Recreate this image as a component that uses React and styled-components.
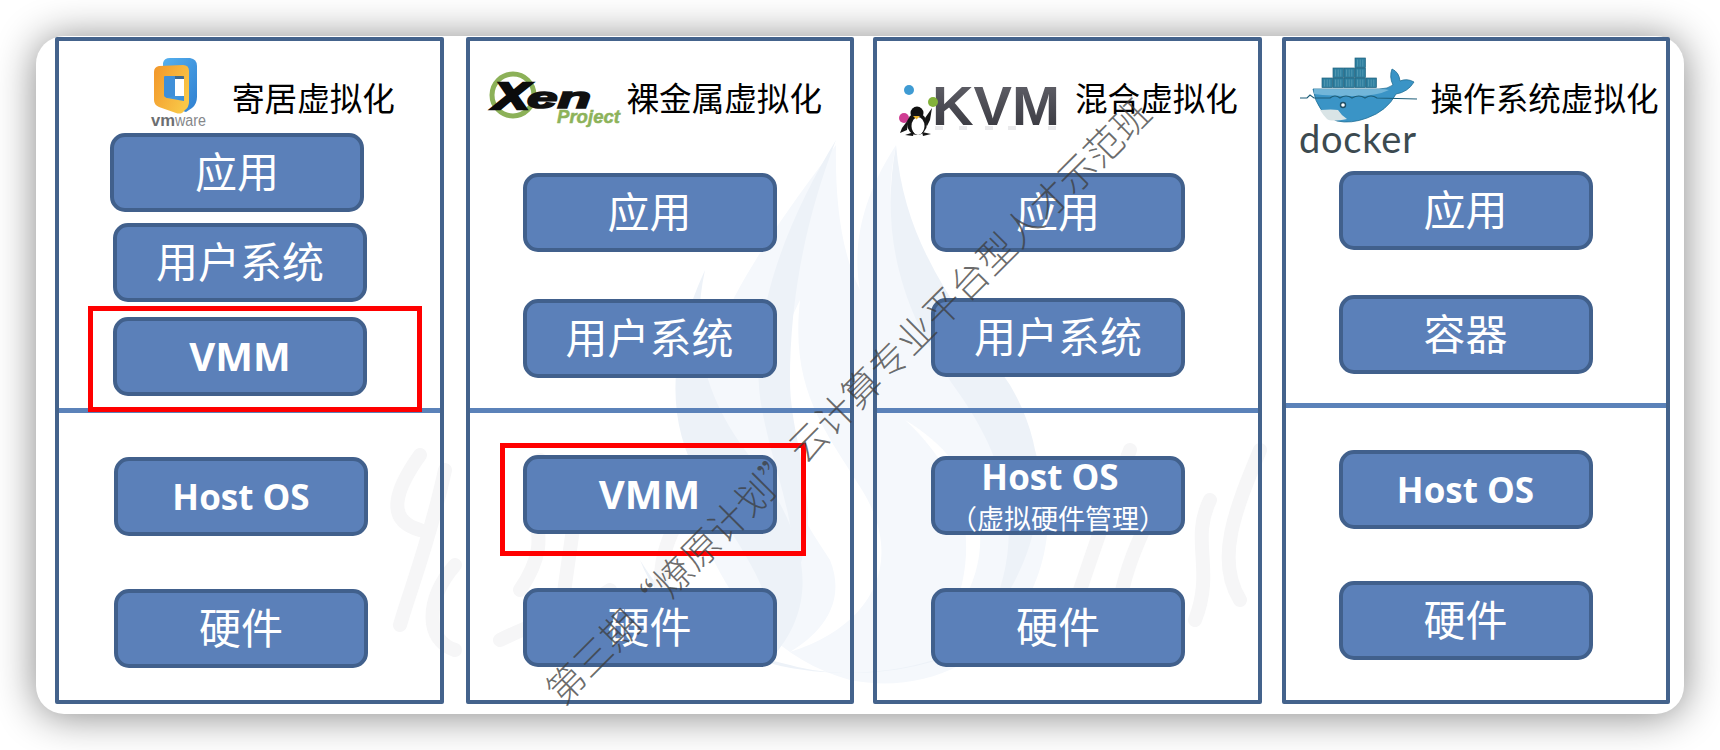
import React from 'react'
import styled, { createGlobalStyle } from 'styled-components'

const GlobalStyle = createGlobalStyle`
    html, body {
        margin: 0;
        padding: 0;
        background: #fff;
        overflow: hidden;
    }
`

function VmwareLogo() {
    return (
        <LogoSvg $left={89} $top={14} width="64" height="76" viewBox="0 0 64 76">
            <defs>
                <linearGradient id="vmBlue" x1="0" y1="0" x2="1" y2="1">
                    <stop offset="0" stopColor="#55b0ee" />
                    <stop offset="1" stopColor="#2f7fd0" />
                </linearGradient>
                <linearGradient id="vmOrange" x1="0" y1="0" x2="1" y2="0.6">
                    <stop offset="0" stopColor="#f2962a" />
                    <stop offset="1" stopColor="#f9c747" />
                </linearGradient>
            </defs>
            <path d="M15 8 Q16 3 22 3 L42 3 Q49 4 49 11 L49 42 Q49 49 44 53 L38 57 L15 50 Z" fill="url(#vmBlue)" />
            <path fillRule="evenodd" d="M6 17 Q6 12 11 11 L35 10 Q41 10 41 16 L41 47 Q41 52 37 55 L34 58 Q31 59 28 58 L11 52 Q6 50 6 45 Z M16 22 L16 40 Q16 42 19 43 L36 46 L36 24 Q36 21 33 21 L18 21 Q16 21 16 22 Z" fill="url(#vmOrange)" />
            <path d="M16 22 Q16 21 18 21 L27 21 L27 41 L19 43 Q16 42 16 40 Z" fill="#3f8fd8" />
            <rect x="27" y="24" width="9" height="17" fill="#fff" />
            <rect x="27" y="21" width="9" height="3" fill="#39556f" opacity="0.7" />
            <text x="3" y="71" fontFamily="'Liberation Sans', sans-serif" fontSize="16" fill="#6c6e71" fontWeight="700" textLength="24" lengthAdjust="spacingAndGlyphs">vm</text>
            <text x="27" y="71" fontFamily="'Liberation Sans', sans-serif" fontSize="16" fill="#85878a" textLength="31" lengthAdjust="spacingAndGlyphs">ware</text>
        </LogoSvg>
    )
}

function XenLogo() {
    return (
        <LogoSvg $left={11} $top={24} width="150" height="70" viewBox="0 0 150 70">
            <circle cx="32" cy="30" r="21" fill="none" stroke="#8cb158" strokeWidth="5" />
            <text x="13" y="44" fontFamily="'Liberation Sans', sans-serif" fontSize="37" fontWeight="700" fontStyle="italic" fill="#0b0b0b" stroke="#0b0b0b" strokeWidth="2.6" textLength="35" lengthAdjust="spacingAndGlyphs">X</text>
            <text x="46" y="43" fontFamily="'Liberation Sans', sans-serif" fontSize="29" fontWeight="700" fontStyle="italic" fill="#111" stroke="#111" strokeWidth="1.6" textLength="64" lengthAdjust="spacingAndGlyphs">en</text>
            <text x="76" y="58" fontFamily="'Liberation Sans', sans-serif" fontSize="19" fontWeight="700" fontStyle="italic" fill="#8db35a" stroke="#8db35a" strokeWidth="0.5" textLength="63" lengthAdjust="spacingAndGlyphs">Project</text>
        </LogoSvg>
    )
}

function KvmLogo() {
    return (
        <LogoSvg $left={18} $top={29} width="170" height="70" viewBox="0 0 170 70">
            <defs>
                <linearGradient id="kvmFace" x1="0" y1="0" x2="0" y2="1">
                    <stop offset="0" stopColor="#66666e" />
                    <stop offset="0.55" stopColor="#4a4a52" />
                    <stop offset="1" stopColor="#35353b" />
                </linearGradient>
            </defs>
            <text x="37" y="55" fontFamily="'Liberation Sans', sans-serif" fontSize="56" fontWeight="700" fill="url(#kvmFace)" textLength="128" lengthAdjust="spacingAndGlyphs">KVM</text>
            <g fill="#a5a5aa" opacity="0.22">
                <rect x="40" y="56" width="8" height="4" />
                <rect x="64" y="56" width="8" height="4" />
                <rect x="90" y="56" width="8" height="4" />
                <rect x="113" y="56" width="8" height="4" />
                <rect x="153" y="56" width="8" height="4" />
            </g>
            <circle cx="14" cy="20" r="5" fill="#3f9bd3" />
            <circle cx="38" cy="32" r="5" fill="#83b23a" />
            <circle cx="9" cy="48" r="5" fill="#cf3d93" />
            <path d="M30 48 L37 38 L35 50 L32 56 Z M13 50 L7 58 L5 63 L12 60 Z" fill="#141414" />
            <circle cx="22" cy="43" r="6.5" fill="#101010" />
            <ellipse cx="22" cy="54" rx="10" ry="11" fill="#141414" />
            <ellipse cx="23" cy="56" rx="6.5" ry="9" fill="#fff" />
            <path d="M18 46 L25 46 L21.5 49.5 Z" fill="#e9b32c" />
            <path d="M10 65 L19 62 L18 66 Z M27 62 L36 64 L28 66 Z" fill="#141414" />
        </LogoSvg>
    )
}

function DockerLogo() {
    const boxes = []
    const rows = [[27, 28, 5], [38, 18, 3], [60, 8, 1]]
    rows.forEach(([x, y, n]) => {
        for (let i = 0; i < n; i++) boxes.push([x + i * 11, y])
    })
    return (
        <LogoSvg $left={9} $top={9} width="130" height="110" viewBox="0 0 130 110">
            {boxes.map(([x, y]) => (
                <g key={`${x}-${y}`}>
                    <rect x={x} y={y} width="10.4" height="9.6" fill="#2f7f9f" stroke="#1f627e" strokeWidth="0.7" />
                    <path d={`M${x + 2.6} ${y + 1.5}v7M${x + 5.2} ${y + 1.5}v7M${x + 7.8} ${y + 1.5}v7`} stroke="#69a9c0" strokeWidth="0.6" />
                </g>
            ))}
            <path d="M18 39 L84 39 Q93 39 98 35 Q94 27 97 19 Q104 22 105 31 Q112 28 119 32 Q113 42 101 44 Q92 61 72 68 Q56 74 42 71 Q22 64 18 39 Z" fill="#3a94c6" stroke="#1f6f95" strokeWidth="0.8" />
            <path d="M19 39 L84 39 Q90 39 94 40 Q82 46 60 46 Q35 46 19 44 Z" fill="#86c2df" opacity="0.75" />
            <path d="M5 48 L12 48 L15 45 L19 48 L35 48 Q40 44 45 48 Q51 44 57 48 Q64 44 70 48 Q76 44 82 48 L122 49" fill="none" stroke="#1d5d78" strokeWidth="1.1" />
            <path d="M25 60 Q37 59 43 60 Q46 65 52 69 Q36 72 32 69 Q28 65 25 60 Z" fill="#d9e4e6" />
            <circle cx="48" cy="55" r="2.5" fill="#fff" stroke="#1f4f66" strokeWidth="1.4" />
            <text x="4" y="103" fontFamily="Lato, 'Open Sans', sans-serif" fontSize="38" fill="#3c4a50" textLength="117" lengthAdjust="spacing">docker</text>
        </LogoSvg>
    )
}

const columns = [
    {
        title: '寄居虚拟化',
        logo: <VmwareLogo />,
        gap: 0,
        headerHeight: 92,
        titleLeft: 20,
        upperHeight: 367,
        upper: [
            { label: '应用', left: 51, top: 0 },
            { label: '用户系统', left: 54, top: 11 },
            { label: 'VMM', left: 54, top: 15, strong: true, big: true },
        ],
        lower: [
            { label: 'Host OS', left: 55, top: 44, strong: true },
            { label: '硬件', left: 55, top: 53 },
        ],
        redBox: { left: 29, top: 265, width: 334, height: 106 },
    },
    {
        title: '裸金属虚拟化',
        logo: <XenLogo />,
        gap: 22,
        headerHeight: 130,
        titleLeft: -4,
        upperHeight: 367,
        upper: [
            { label: '应用', left: 53, top: 2 },
            { label: '用户系统', left: 53, top: 47 },
        ],
        lower: [
            { label: 'VMM', left: 53, top: 42, strong: true, big: true },
            { label: '硬件', left: 53, top: 54 },
        ],
        redBox: { left: 30, top: 402, width: 306, height: 113 },
    },
    {
        title: '混合虚拟化',
        logo: <KvmLogo />,
        gap: 19,
        headerHeight: 130,
        titleLeft: 10,
        upperHeight: 367,
        upper: [
            { label: '应用', left: 54, top: 2 },
            { label: '用户系统', left: 54, top: 46 },
        ],
        lower: [
            { label: 'Host OS', sub: '（虚拟硬件管理）', left: 54, top: 43, strong: true, shift: 16 },
            { label: '硬件', left: 54, top: 53 },
        ],
    },
    {
        title: '操作系统虚拟化',
        logo: <DockerLogo />,
        gap: 20,
        headerHeight: 130,
        titleLeft: 6,
        upperHeight: 362,
        upper: [
            { label: '应用', left: 53, top: 0 },
            { label: '容器', left: 53, top: 45 },
        ],
        lower: [
            { label: 'Host OS', left: 53, top: 42, strong: true },
            { label: '硬件', left: 53, top: 52 },
        ],
    },
]

function StackButton({ item }) {
    return (
        <Block $left={item.left} $top={item.top}>
            <BlockLabel $strong={item.strong} $big={item.big} $shift={item.shift}>{item.label}</BlockLabel>
            {item.sub && <BlockSub>{item.sub}</BlockSub>}
        </Block>
    )
}

function Backdrop() {
    return (
        <BackdropSvg width="1648" height="678" viewBox="36 36 1648 678">
            <path fill="#f5f8fc" d="M836 145 C772 230 700 330 690 430 C680 530 740 650 850 680 C950 700 1045 630 1048 520 C1050 420 960 340 905 255 C885 215 890 175 896 145 C870 185 850 235 860 290 C840 250 835 195 836 145 Z" />
            <path fill="#fff" d="M800 300 C740 420 790 500 830 560 C850 610 810 640 790 652 C875 625 905 560 862 490 C825 430 790 390 800 300 Z" />
            <path fill="#fff" d="M905 420 C960 470 985 540 950 620 C1000 560 990 470 905 420 Z" />
            <g fill="#edf2f8">
                <path d="M836 140 C790 215 745 320 762 410 C778 490 800 520 790 590 C830 510 790 450 790 380 C790 300 805 220 836 140 Z" />
                <path d="M896 145 C880 235 900 310 958 392 C1012 468 1026 545 985 625 C1040 560 1060 470 1010 385 C960 310 905 250 896 145 Z" />
                <path d="M705 270 C668 350 665 420 700 480 C745 560 780 590 770 660 C835 590 790 510 745 450 C705 395 690 340 705 270 Z" />
                <path d="M640 560 C690 690 930 720 1060 585 C1000 655 880 690 790 665 C720 650 670 610 640 560 Z" />
            </g>
            <g fill="none" stroke="#f6f6f7" strokeWidth="14" strokeLinecap="round" strokeLinejoin="round">
                <path d="M420 455 C395 490 385 520 420 530 M445 470 C430 540 410 590 400 625" />
                <path d="M455 565 C425 600 425 640 455 650" />
                <path d="M540 460 C520 520 560 530 520 590 M580 480 L560 620 M500 640 C540 620 580 610 610 590" />
                <path d="M690 500 C650 560 650 610 700 640" />
                <path d="M1130 450 C1110 500 1090 560 1070 620 M1170 470 C1150 520 1130 550 1120 600" />
                <path d="M1210 500 C1190 540 1215 570 1195 620 M1260 450 C1235 510 1215 560 1240 600" />
            </g>
        </BackdropSvg>
    )
}

function App() {
    return (
        <Page>
            <GlobalStyle />
            <Card>
                <Backdrop />
                {columns.map(col => (
                    <Column key={col.title} $gap={col.gap}>
                        <Upper $height={col.upperHeight}>
                            <Header $height={col.headerHeight}>
                                {col.logo}
                                <Title $left={col.titleLeft}>{col.title}</Title>
                            </Header>
                            {col.upper.map(item => <StackButton key={item.label} item={item} />)}
                        </Upper>
                        <Divider />
                        <Lower>
                            {col.lower.map(item => <StackButton key={item.label} item={item} />)}
                        </Lower>
                        {col.redBox && <RedBox {...redProps(col.redBox)} />}
                    </Column>
                ))}
                <Watermark>第三期“燎原计划”云计算专业平台型人才示范班</Watermark>
            </Card>
        </Page>
    )
}

const redProps = box => ({ $left: box.left, $top: box.top, $width: box.width, $height: box.height })

export default App

const Page = styled.div`
    width: 1720px;
    height: 750px;
    padding: 36px 0 0 36px;
    box-sizing: border-box;
    background: #fff;
    font-family: "Noto Sans CJK SC", sans-serif;
`

const Card = styled.div`
    position: relative;
    display: flex;
    align-items: flex-start;
    width: 1648px;
    height: 678px;
    padding: 1px 0 0 19px;
    box-sizing: border-box;
    background: #fff;
    border-radius: 28px;
    box-shadow: 0 2px 40px rgba(0, 0, 0, 0.48);
`

const BackdropSvg = styled.svg`
    position: absolute;
    left: 0;
    top: 0;
`

const Column = styled.section`
    position: relative;
    display: flex;
    flex-direction: column;
    width: 388.5px;
    height: 667px;
    margin-left: ${props => props.$gap}px;
    box-sizing: border-box;
    border: 4px solid #44638c;
    border-radius: 2px;
`

const Upper = styled.div`
    height: ${props => props.$height}px;
    flex: none;
`

const Lower = styled.div`
    flex: 1;
`

const Divider = styled.div`
    height: 5px;
    flex: none;
    background: #5b82b9;
`

const Header = styled.header`
    display: flex;
    align-items: flex-start;
    height: ${props => props.$height}px;
`

const LogoSvg = styled.svg`
    flex: none;
    margin-left: ${props => props.$left}px;
    margin-top: ${props => props.$top}px;
`

const Title = styled.h2`
    flex: none;
    margin: 34px 0 0 ${props => props.$left}px;
    font-size: 32.6px;
    font-weight: 400;
    line-height: 44px;
    color: #000;
    white-space: nowrap;
`

const Block = styled.div`
    position: relative;
    display: flex;
    flex-direction: column;
    align-items: center;
    justify-content: center;
    width: 254px;
    height: 79px;
    margin-left: ${props => props.$left}px;
    margin-top: ${props => props.$top}px;
    box-sizing: border-box;
    background: #5b80b9;
    border: 4.5px solid #41608c;
    border-radius: 15px;
    color: #fff;
    white-space: nowrap;
`

const BlockLabel = styled.span`
    margin-right: ${props => props.$shift || 0}px;
    padding-bottom: ${props => props.$strong ? (props.$big ? 2 : 0) : 6}px;
    font-family: ${props => props.$strong ? '"Open Sans", "Noto Sans CJK SC", sans-serif' : '"Noto Sans CJK SC", sans-serif'};
    font-size: ${props => props.$big ? 40 : props.$strong ? 35 : 42}px;
    font-weight: ${props => props.$strong ? 700 : 400};
    line-height: 36px;
`

const BlockSub = styled.span`
    margin-top: 8px;
    font-family: "Noto Sans CJK SC", sans-serif;
    font-size: 27px;
    font-weight: 400;
    line-height: 30px;
`

const RedBox = styled.div`
    position: absolute;
    left: ${props => props.$left}px;
    top: ${props => props.$top}px;
    width: ${props => props.$width}px;
    height: ${props => props.$height}px;
    box-sizing: border-box;
    border: 5px solid #ff0000;
`

const Watermark = styled.div`
    position: absolute;
    left: 811px;
    top: 364px;
    transform: translate(-50%, -50%) rotate(-45deg);
    font-size: 38px;
    font-weight: 300;
    line-height: 46px;
    color: rgba(60, 60, 60, 0.75);
    white-space: nowrap;
`
